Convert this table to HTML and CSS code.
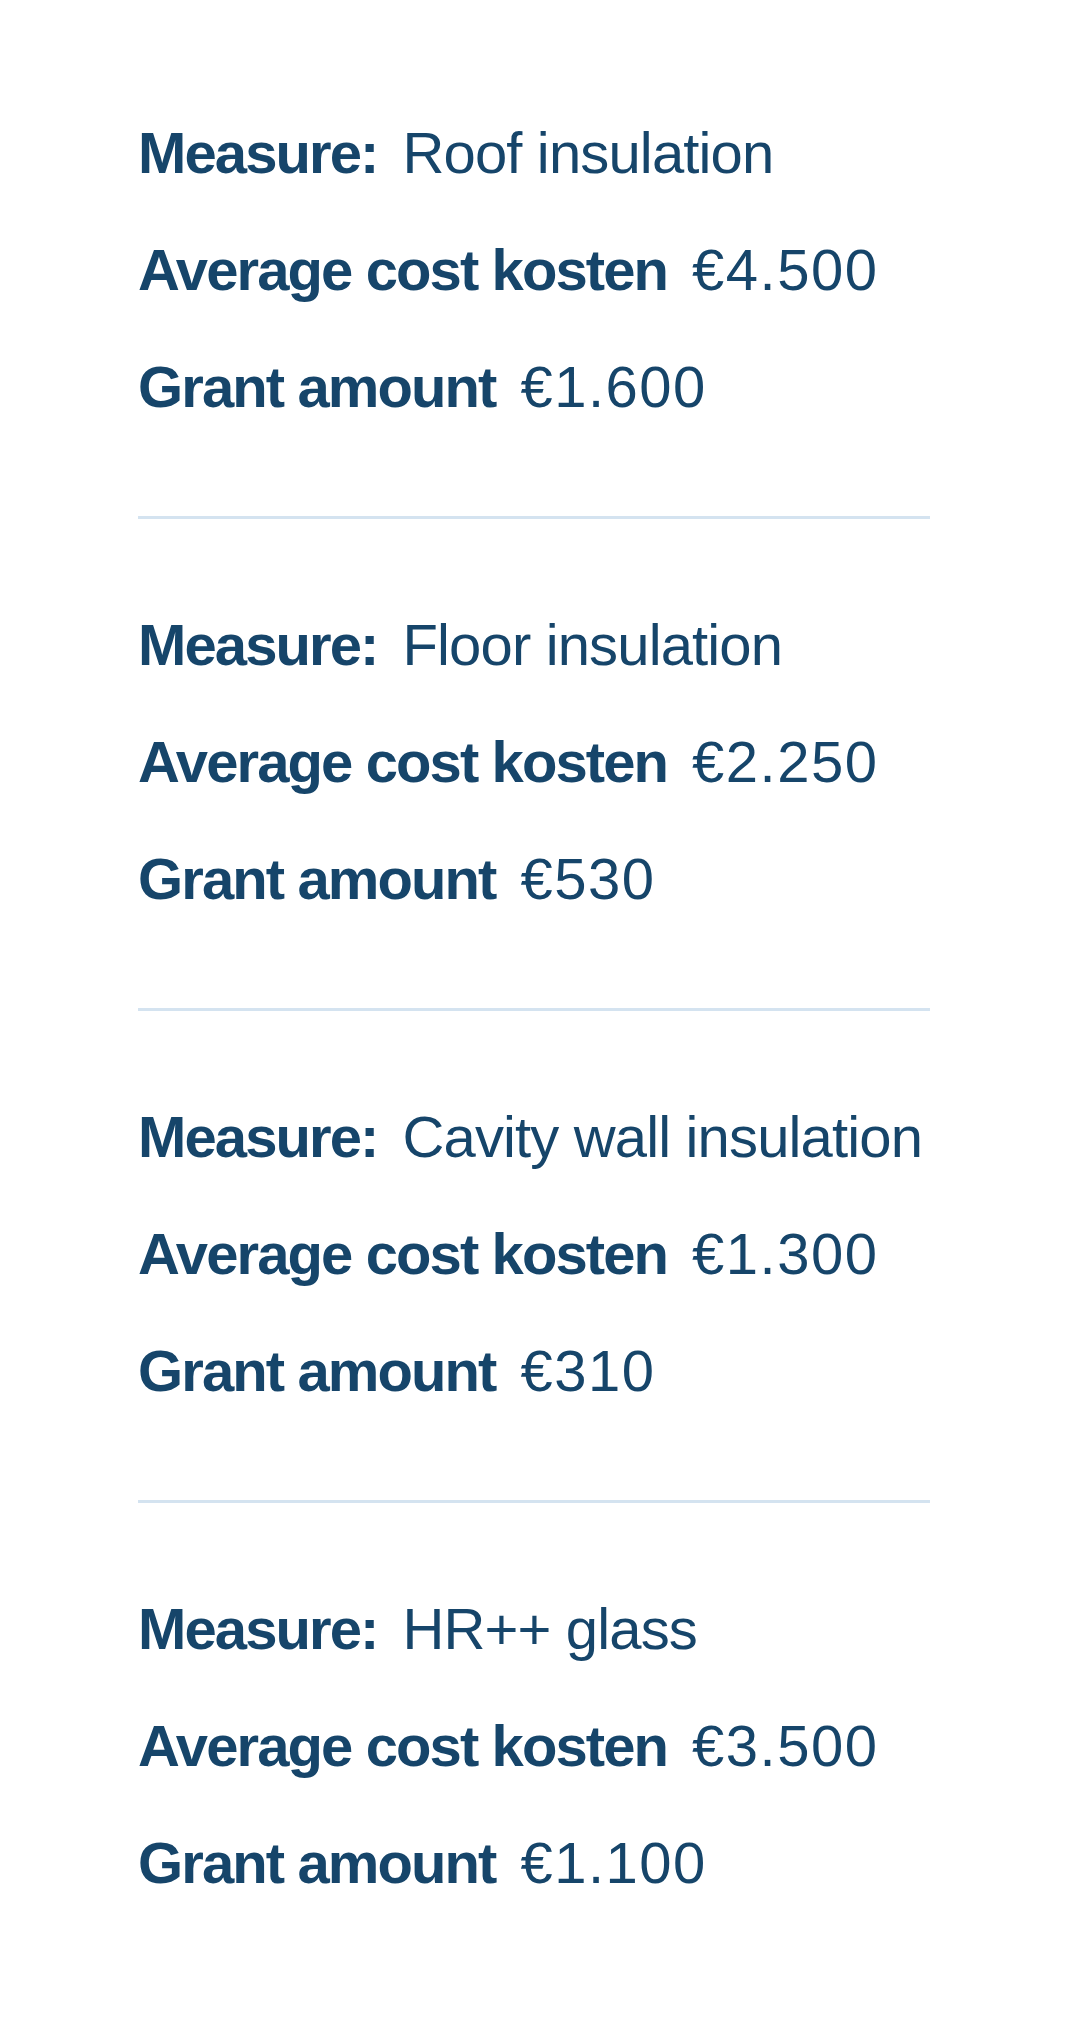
FILE: index.html
```html
<!DOCTYPE html>
<html lang="en">
<head>
<meta charset="utf-8">
<title>Measures</title>
<link rel="stylesheet" href="styles.css">
</head>
<body>
<main class="list">
  <section class="measure">
    <div class="row"><span class="label">Measure:</span><span class="value">Roof insulation</span></div>
    <div class="row"><span class="label">Average cost kosten</span><span class="value amount">€4.500</span></div>
    <div class="row"><span class="label">Grant amount</span><span class="value amount">€1.600</span></div>
  </section>
  <section class="measure">
    <div class="row"><span class="label">Measure:</span><span class="value">Floor insulation</span></div>
    <div class="row"><span class="label">Average cost kosten</span><span class="value amount">€2.250</span></div>
    <div class="row"><span class="label">Grant amount</span><span class="value amount">€530</span></div>
  </section>
  <section class="measure">
    <div class="row"><span class="label">Measure:</span><span class="value">Cavity wall insulation</span></div>
    <div class="row"><span class="label">Average cost kosten</span><span class="value amount">€1.300</span></div>
    <div class="row"><span class="label">Grant amount</span><span class="value amount">€310</span></div>
  </section>
  <section class="measure">
    <div class="row"><span class="label">Measure:</span><span class="value">HR++ glass</span></div>
    <div class="row"><span class="label">Average cost kosten</span><span class="value amount">€3.500</span></div>
    <div class="row"><span class="label">Grant amount</span><span class="value amount">€1.100</span></div>
  </section>
</main>
</body>
</html>
```

FILE: styles.css
```css
html, body {
  margin: 0;
  padding: 0;
  background: #ffffff;
}

body {
  font-family: "Liberation Sans", Arial, sans-serif;
  color: #16456a;
}

.list {
  width: 792px;
  margin-left: 138px;
  padding-top: 27px;
}

.measure {
  padding: 67px 0 71px;
  border-bottom: 3px solid #d4e3f0;
}

.measure:last-child {
  border-bottom: none;
}

.row {
  display: flex;
  align-items: baseline;
  gap: 25px;
  font-size: 58px;
  line-height: 117px;
  white-space: nowrap;
}

.label {
  font-weight: 700;
  letter-spacing: -1.9px;
}

.value {
  font-weight: 400;
  letter-spacing: -0.85px;
}

.value.amount {
  letter-spacing: 1.5px;
}
```
